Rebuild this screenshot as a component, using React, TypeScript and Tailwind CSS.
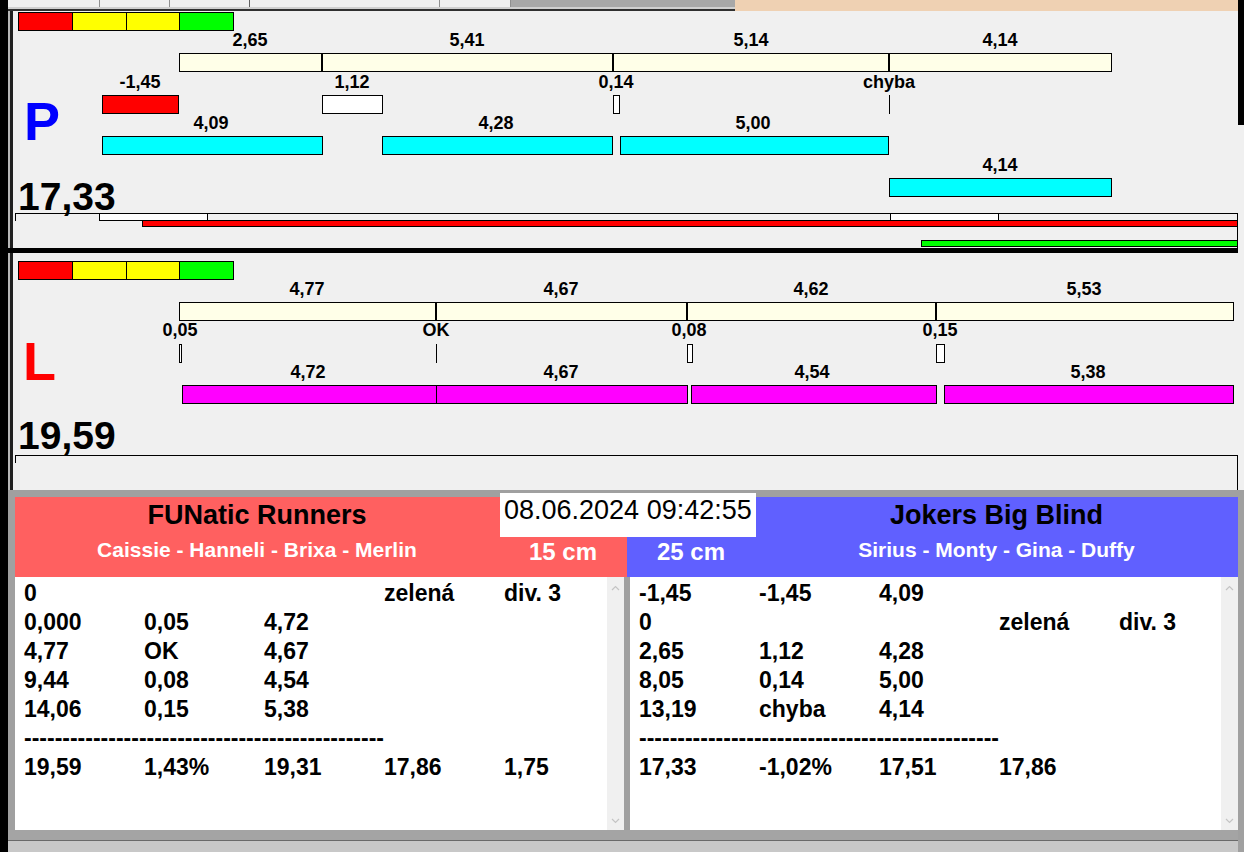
import React from "react";

type R = { x: number; y: number; w: number; h: number; cls: string };
type L = { t: string; cx: number; cy: number };

const CREAM = "bg-[#ffffe8] border border-black";
const WHITE = "bg-white border border-black";
const CYAN = "bg-[#00ffff] border border-black";
const MAG = "bg-[#ff00ff] border border-black";
const RED = "bg-[#ff0000] border border-black";
const GREEN = "bg-[#00ff00] border border-black";
const YELLOW = "bg-[#ffff00] border border-black";
const LINE = "bg-black";

const colorBar = (y: number): R[] => [
  { x: 18, y, w: 55, h: 19, cls: RED },
  { x: 72, y, w: 55, h: 19, cls: YELLOW },
  { x: 126, y, w: 54, h: 19, cls: YELLOW },
  { x: 179, y, w: 55, h: 19, cls: GREEN },
];

const pRects: R[] = [
  ...colorBar(12),
  { x: 179, y: 53, w: 143, h: 19, cls: CREAM },
  { x: 322, y: 53, w: 291, h: 19, cls: CREAM },
  { x: 613, y: 53, w: 276, h: 19, cls: CREAM },
  { x: 889, y: 53, w: 223, h: 19, cls: CREAM },
  { x: 102, y: 95, w: 77, h: 19, cls: RED },
  { x: 322, y: 95, w: 61, h: 19, cls: WHITE },
  { x: 613, y: 95, w: 7, h: 19, cls: WHITE },
  { x: 889, y: 95, w: 1, h: 19, cls: LINE },
  { x: 102, y: 136, w: 221, h: 19, cls: CYAN },
  { x: 382, y: 136, w: 231, h: 19, cls: CYAN },
  { x: 620, y: 136, w: 269, h: 19, cls: CYAN },
  { x: 889, y: 178, w: 223, h: 19, cls: CYAN },
  { x: 15, y: 213, w: 1223, h: 1, cls: LINE },
  { x: 15, y: 213, w: 1, h: 8, cls: LINE },
  { x: 99, y: 213, w: 109, h: 8, cls: WHITE },
  { x: 890, y: 213, w: 109, h: 8, cls: WHITE },
  { x: 142, y: 220, w: 1096, h: 7, cls: RED },
  { x: 921, y: 240, w: 317, h: 7, cls: GREEN },
  { x: 1237, y: 213, w: 1, h: 35, cls: LINE },
];

const pLabels: L[] = [
  { t: "2,65", cx: 250, cy: 40 },
  { t: "5,41", cx: 467, cy: 40 },
  { t: "5,14", cx: 751, cy: 40 },
  { t: "4,14", cx: 1000, cy: 40 },
  { t: "-1,45", cx: 140, cy: 82 },
  { t: "1,12", cx: 352, cy: 82 },
  { t: "0,14", cx: 616, cy: 82 },
  { t: "chyba", cx: 889, cy: 82 },
  { t: "4,09", cx: 211, cy: 123 },
  { t: "4,28", cx: 496, cy: 123 },
  { t: "5,00", cx: 753, cy: 123 },
  { t: "4,14", cx: 1000, cy: 165 },
];

const lRects: R[] = [
  ...colorBar(261),
  { x: 179, y: 302, w: 257, h: 19, cls: CREAM },
  { x: 436, y: 302, w: 251, h: 19, cls: CREAM },
  { x: 687, y: 302, w: 249, h: 19, cls: CREAM },
  { x: 936, y: 302, w: 298, h: 19, cls: CREAM },
  { x: 179, y: 344, w: 3, h: 19, cls: WHITE },
  { x: 436, y: 344, w: 1, h: 19, cls: LINE },
  { x: 687, y: 344, w: 6, h: 19, cls: WHITE },
  { x: 936, y: 344, w: 9, h: 19, cls: WHITE },
  { x: 182, y: 385, w: 255, h: 19, cls: MAG },
  { x: 436, y: 385, w: 252, h: 19, cls: MAG },
  { x: 691, y: 385, w: 246, h: 19, cls: MAG },
  { x: 944, y: 385, w: 290, h: 19, cls: MAG },
  { x: 15, y: 455, w: 1223, h: 1, cls: LINE },
  { x: 15, y: 455, w: 1, h: 8, cls: LINE },
  { x: 1237, y: 455, w: 1, h: 35, cls: LINE },
];

const lLabels: L[] = [
  { t: "4,77", cx: 307, cy: 289 },
  { t: "4,67", cx: 561, cy: 289 },
  { t: "4,62", cx: 811, cy: 289 },
  { t: "5,53", cx: 1084, cy: 289 },
  { t: "0,05", cx: 180, cy: 330 },
  { t: "OK", cx: 436, cy: 330 },
  { t: "0,08", cx: 689, cy: 330 },
  { t: "0,15", cx: 940, cy: 330 },
  { t: "4,72", cx: 308, cy: 372 },
  { t: "4,67", cx: 561, cy: 372 },
  { t: "4,54", cx: 812, cy: 372 },
  { t: "5,38", cx: 1088, cy: 372 },
];

const OX = 13;

function Chart({
  oy,
  rects,
  labels,
  letter,
  letterCls,
  letterX,
  total,
  letterCy,
  totalCy,
}: {
  oy: number;
  rects: R[];
  labels: L[];
  letter: string;
  letterCls: string;
  letterX: number;
  total: string;
  letterCy: number;
  totalCy: number;
}) {
  return (
    <div className="relative flex-1 min-w-0 bg-[#f0f0f0] overflow-hidden">
      {rects.map((r, i) => (
        <div
          key={i}
          className={`absolute box-border ${r.cls}`}
          style={{ left: r.x - OX, top: r.y - oy, width: r.w, height: r.h }}
        />
      ))}
      {labels.map((l, i) => (
        <div
          key={"l" + i}
          className="absolute w-[120px] text-center text-[18px] font-bold leading-none text-black whitespace-nowrap"
          style={{ left: l.cx - 60 - OX, top: l.cy - 8.8 - oy }}
        >
          {l.t}
        </div>
      ))}
      <div
        className={`absolute text-[54px] font-bold leading-none ${letterCls}`}
        style={{ left: letterX - OX, top: letterCy - 26.5 - oy }}
      >
        {letter}
      </div>
      <div
        className="absolute text-[39px] font-bold leading-none text-black"
        style={{ left: 18 - OX, top: totalCy - 19.1 - oy }}
      >
        {total}
      </div>
    </div>
  );
}

type Row = string[];

const leftRows: Row[] = [
  ["0", "", "", "zelená", "div. 3"],
  ["0,000", "0,05", "4,72"],
  ["4,77", "OK", "4,67"],
  ["9,44", "0,08", "4,54"],
  ["14,06", "0,15", "5,38"],
  ["DASH"],
  ["19,59", "1,43%", "19,31", "17,86", "1,75"],
];

const rightRows: Row[] = [
  ["-1,45", "-1,45", "4,09"],
  ["0", "", "", "zelená", "div. 3"],
  ["2,65", "1,12", "4,28"],
  ["8,05", "0,14", "5,00"],
  ["13,19", "chyba", "4,14"],
  ["DASH"],
  ["17,33", "-1,02%", "17,51", "17,86"],
];

const DASHES = "-----------------------------------------------";

function Chevron({ up }: { up: boolean }) {
  return (
    <svg width="9" height="6" viewBox="0 0 9 6">
      <path
        d={up ? "M1 5 L4.5 1.5 L8 5" : "M1 1 L4.5 4.5 L8 1"}
        fill="none"
        stroke="#c4c4c4"
        strokeWidth="1.2"
      />
    </svg>
  );
}

function List({ rows, width }: { rows: Row[]; width: string }) {
  return (
    <div className={`flex ${width} bg-white overflow-hidden`}>
      <div className="flex-1 min-w-0 overflow-hidden pt-[2px] pl-[9px] text-[23px] font-bold leading-[29px] text-black">
        {rows.map((r, i) =>
          r[0] === "DASH" ? (
            <div key={i} className="h-[29px] whitespace-nowrap">
              {DASHES}
            </div>
          ) : (
            <div key={i} className="flex h-[29px]">
              {r.map((c, j) => (
                <div key={j} className="w-[120px] shrink-0 whitespace-nowrap">
                  {c}
                </div>
              ))}
            </div>
          )
        )}
      </div>
      <div className="w-[17px] shrink-0 bg-[#f0f0f0] flex flex-col items-center justify-between pt-[8px] pb-[6px]">
        <Chevron up />
        <Chevron up={false} />
      </div>
    </div>
  );
}

function Header({
  title,
  names,
  cm,
  cmFirst,
  bg,
}: {
  title: string;
  names: string;
  cm: string;
  cmFirst: boolean;
  bg: string;
}) {
  const main = (
    <div className="flex-1 min-w-0 flex flex-col items-center">
      <div className="pt-[5px] text-[27px] font-bold leading-none text-black whitespace-nowrap">
        {title}
      </div>
      <div className="mt-[10px] text-[21px] font-bold leading-none text-white whitespace-nowrap">
        {names}
      </div>
    </div>
  );
  const side = (
    <div className="w-[128px] shrink-0 flex justify-center pt-[43px] text-[24px] font-bold leading-none text-white whitespace-nowrap">
      {cm}
    </div>
  );
  return (
    <div className={`flex-1 min-w-0 flex ${bg}`}>
      {cmFirst ? side : main}
      {cmFirst ? main : side}
    </div>
  );
}

export default function App() {
  return (
    <div className="w-[1244px] h-[852px] grid grid-cols-[8px_1230px_6px] bg-[#f0f0f0] overflow-hidden font-['Liberation_Sans',Arial,sans-serif]">
      <div className="bg-black" />
      <div className="flex flex-col overflow-hidden">
        {/* top tab strip */}
        <div className="h-[11px] shrink-0 flex">
          <div className="w-[727px] shrink-0 flex flex-col">
            <div className="h-[7px] flex">
              <div className="w-[92px] shrink-0 border-r border-[#909090] bg-[#f0f0f0]" />
              <div className="w-[70px] shrink-0 border-r border-[#909090] bg-[#f0f0f0]" />
              <div className="w-[80px] shrink-0 border-r border-[#606060] bg-[#f0f0f0]" />
              <div className="w-[190px] shrink-0 border-r border-[#909090] bg-[#f0f0f0]" />
              <div className="w-[71px] shrink-0 border-r border-[#909090] bg-[#f0f0f0]" />
              <div className="flex-1 bg-[#a8a8a8]" />
            </div>
            <div className="h-[2px] bg-[#d0d0d0]" />
            <div className="h-[2px] bg-[#303030]" />
          </div>
          <div className="flex-1 min-w-0 bg-[#efd1b3]" />
        </div>
        {/* panel P */}
        <div className="h-[237px] shrink-0 flex">
          <div className="w-[2px] shrink-0 bg-[#b8b8b8]" />
          <div className="w-[3px] shrink-0 bg-[#202020]" />
          <Chart
            oy={11}
            rects={pRects}
            labels={pLabels}
            letter="P"
            letterCls="text-[#0000ff]"
            letterX={24}
            total="17,33"
            letterCy={120}
            totalCy={196.5}
          />
        </div>
        <div className="h-[5px] shrink-0 bg-black" />
        {/* panel L */}
        <div className="h-[237px] shrink-0 flex">
          <div className="w-[2px] shrink-0 bg-[#b8b8b8]" />
          <div className="w-[3px] shrink-0 bg-[#202020]" />
          <Chart
            oy={253}
            rects={lRects}
            labels={lLabels}
            letter="L"
            letterCls="text-[#ff0000]"
            letterX={23}
            total="19,59"
            letterCy={360}
            totalCy={435}
          />
        </div>
        <div className="h-[7px] shrink-0 bg-[#a0a0a0]" />
        {/* bottom info */}
        <div className="h-[333px] shrink-0 flex relative">
          <div className="w-[7px] shrink-0 bg-[#a0a0a0]" />
          <div className="flex-1 min-w-0 flex flex-col">
            <div className="h-[80px] shrink-0 grid grid-cols-[612px_1fr]">
              <Header
                title="FUNatic Runners"
                names="Caissie - Hanneli - Brixa - Merlin"
                cm="15 cm"
                cmFirst={false}
                bg="bg-[#ff6060]"
              />
              <Header
                title="Jokers Big Blind"
                names="Sirius - Monty - Gina - Duffy"
                cm="25 cm"
                cmFirst
                bg="bg-[#6060ff]"
              />
            </div>
            <div className="h-[253px] shrink-0 grid grid-cols-[609px_6px_1fr]">
              <List rows={leftRows} width="min-w-0" />
              <div className="bg-[#a0a0a0]" />
              <List rows={rightRows} width="min-w-0" />
            </div>
          </div>
          <div className="absolute left-[492px] top-[-4px] w-[256px] h-[44px] bg-white pl-[4px] pt-[4px] text-[27px] leading-none text-black whitespace-nowrap">
            08.06.2024 09:42:55
          </div>
        </div>
        <div className="flex-1 flex flex-col">
          <div className="h-[10px] bg-[#a4a4a4]" />
          <div className="h-[1px] bg-[#6a6a6a]" />
          <div className="flex-1 bg-[#c8c8c8]" />
        </div>
      </div>
      <div className="flex flex-col">
        <div className="h-[125px] bg-black" />
        <div className="h-[365px] bg-[#f0f0f0]" />
        <div className="flex-1 bg-[#a0a0a0]" />
      </div>
    </div>
  );
}
